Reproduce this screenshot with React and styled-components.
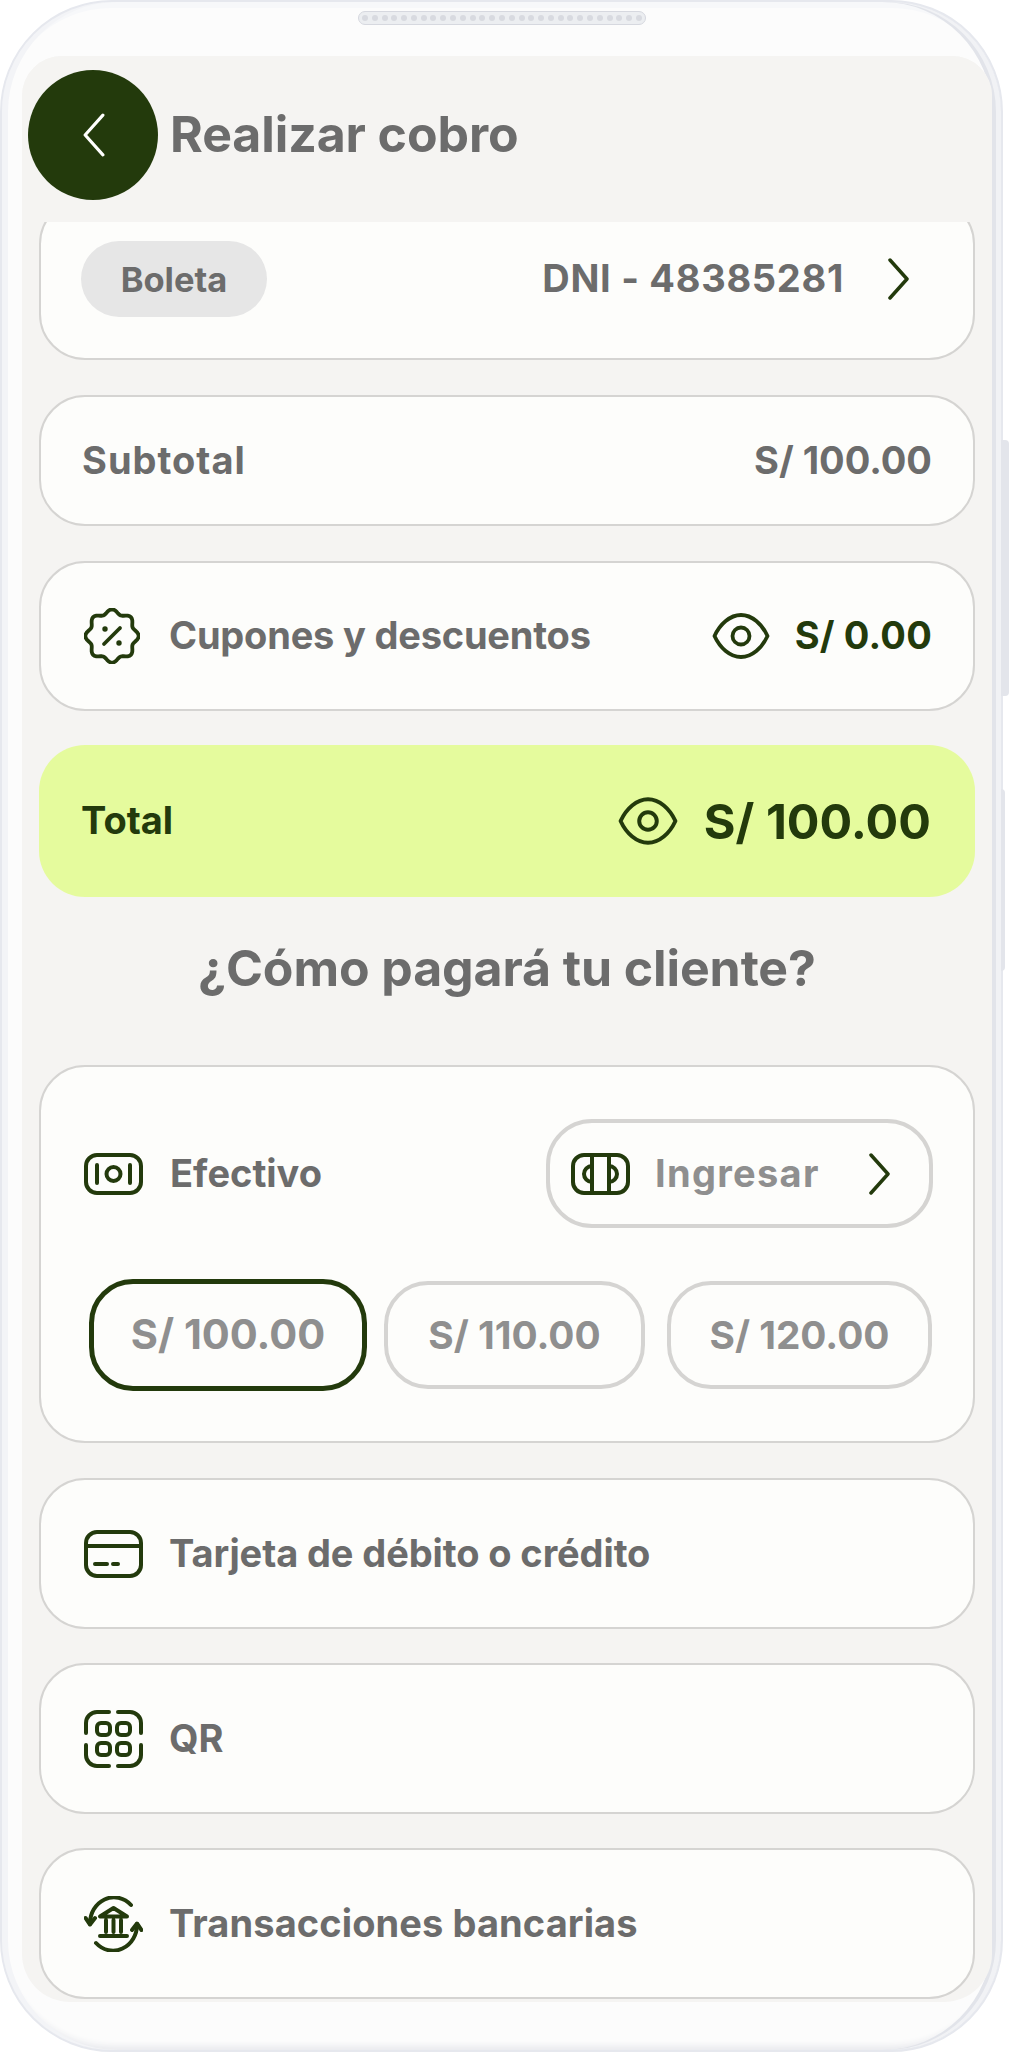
import React from 'react';
import styled, { createGlobalStyle } from 'styled-components';

const DARK = '#233a0c';
const TEXT = '#6c6c6c';
const SOFT = '#8f8f8f';
const LINE = '#d5d4d2';

const GlobalStyle = createGlobalStyle`
  html, body {
    margin: 0;
    padding: 0;
    background: #ffffff;
  }
  body {
    font-family: Inter, "Liberation Sans", sans-serif;
    font-weight: 650;
    color: ${TEXT};
  }
`;

const Phone = styled.div`
  position: relative;
  box-sizing: border-box;
  width: 1003px;
  height: 2052px;
  padding: 54px 9px 0 20px;
  background: #fcfcfc;
  border-radius: 112px;
  border: 2px solid #e6e8ee;
  box-shadow:
    inset -5px 0 0 #f1f2f5,
    inset -9px 0 0 #e2e4ea,
    inset 6px 0 0 #f3f4f7,
    inset 0 -6px 6px -2px #e9eaee,
    inset 0 6px 0 #f7f8fa;
`;

const SideButton = styled.div`
  position: absolute;
  left: 100%;
  top: ${(props) => props.$top}px;
  width: ${(props) => props.$width}px;
  height: ${(props) => props.$height}px;
  background: #e3e5eb;
  border-radius: 0 4px 4px 0;
`;

const Speaker = styled.div`
  position: absolute;
  top: 9px;
  left: 356px;
  width: 288px;
  height: 14px;
  box-sizing: border-box;
  display: flex;
  align-items: center;
  justify-content: space-between;
  padding: 0 3px;
  background: #eceef1;
  border: 1px solid #d6d8df;
  border-radius: 7px;
`;

const SpeakerDot = styled.span`
  width: 6px;
  height: 6px;
  border-radius: 50%;
  background: #d8dae0;
`;

const Screen = styled.div`
  height: 1946px;
  display: flex;
  flex-direction: column;
  overflow: hidden;
  background: #f5f4f2;
  border-radius: 40px 40px 48px 48px;
`;

const Header = styled.header`
  flex: none;
  position: relative;
  z-index: 1;
  box-sizing: border-box;
  height: 166px;
  display: flex;
  align-items: center;
  gap: 12px;
  padding: 0 0 8px 6px;
  background: #f5f4f2;
`;

const BackButton = styled.button`
  width: 130px;
  height: 130px;
  padding: 0;
  border: none;
  border-radius: 50%;
  display: flex;
  align-items: center;
  justify-content: center;
  background: ${DARK};
`;

const Title = styled.h1`
  margin: 0 0 2px;
  font-size: 50px;
  font-weight: 650;
  letter-spacing: -0.1px;
  color: ${TEXT};
`;

const Content = styled.main`
  display: flex;
  flex-direction: column;
  gap: 35px;
  padding: 0 17px;
`;

const Card = styled.section`
  box-sizing: border-box;
  height: ${(props) => props.$height}px;
  flex: none;
  display: flex;
  align-items: center;
  justify-content: space-between;
  margin-top: ${(props) => (props.$tight ? -1 : 0)}px;
  padding: 0 ${(props) => props.$right || 41}px 0 ${(props) => props.$left || 43}px;
  background: #fdfdfb;
  border: 2px solid ${LINE};
  border-radius: 46px;
`;

// The first card is scrolled partly under the header
const ScrolledCard = styled(Card)`
  margin-top: -24px;
`;

const TotalCard = styled(Card)`
  background: #e5fb9d;
  border: none;
  padding: 0 44px 0 42px;
  margin-top: -1px;
`;

const CashCard = styled.section`
  box-sizing: border-box;
  height: 378px;
  flex: none;
  padding: 52px 40px 0 43px;
  display: flex;
  flex-direction: column;
  gap: 51px;
  background: #fdfdfb;
  border: 2px solid ${LINE};
  border-radius: 46px;
`;

const CashRow = styled.div`
  display: flex;
  align-items: center;
  justify-content: space-between;
`;

const AmountRow = styled.div`
  display: flex;
  align-items: center;
  gap: 17px;
  padding-left: 5px;
`;

const Group = styled.div`
  display: flex;
  align-items: center;
  gap: ${(props) => props.$gap || 27}px;
`;

const Label = styled.span`
  padding-bottom: 2px;
  font-size: 38px;
  font-weight: 650;
  letter-spacing: ${(props) => props.$spacing || 0}px;
  color: ${(props) => props.$color || TEXT};
  white-space: nowrap;
`;

const Chip = styled.span`
  width: 186px;
  height: 76px;
  display: flex;
  align-items: center;
  justify-content: center;
  background: #e6e6e6;
  border-radius: 38px;
  font-size: 34.5px;
  color: ${TEXT};
`;

const BigAmount = styled.span`
  font-size: 48.5px;
  font-weight: 700;
  color: ${DARK};
`;

const Heading = styled.h2`
  margin: 5px 0 31px;
  height: 62px;
  line-height: 62px;
  text-align: center;
  font-size: 50px;
  font-weight: 650;
  letter-spacing: -0.1px;
  color: ${TEXT};
`;

const IngresarButton = styled.button`
  box-sizing: border-box;
  width: 387px;
  height: 109px;
  padding: 0 38px 0 21px;
  display: flex;
  align-items: center;
  gap: 25px;
  background: transparent;
  border: 4px solid ${LINE};
  border-radius: 46px;
  font: inherit;

  & > svg:last-child {
    margin-left: auto;
  }
`;

const AmountButton = styled.button`
  box-sizing: border-box;
  flex: none;
  width: ${(props) => props.$width}px;
  height: ${(props) => (props.$active ? 112 : 108)}px;
  margin-left: ${(props) => props.$shift || 0}px;
  padding: 0 0 2px;
  background: transparent;
  border: ${(props) => (props.$active ? `5px solid ${DARK}` : `4px solid ${LINE}`)};
  border-radius: 44px;
  font-family: inherit;
  font-weight: 650;
  font-size: ${(props) => (props.$active ? 41.5 : 38.8)}px;
  color: ${SOFT};
`;

const Icon = styled.svg`
  flex: none;
  display: block;
  fill: none;
  stroke: ${(props) => props.$color || DARK};
  stroke-width: ${(props) => props.$stroke || 4};
  stroke-linecap: round;
  stroke-linejoin: round;
`;

const Chevron = ({ left, color, width = 22, height = 42, stroke = 3.5 }) => (
  <Icon $color={color} $stroke={stroke} width={width} height={height} viewBox="0 0 22 42">
    {left ? <path d="M20 2 L3 21 L20 40" /> : <path d="M2 2 L19 21 L2 40" />}
  </Icon>
);

const Eye = ({ width = 58, height = 48 }) => (
  <Icon $stroke={3.8} width={width} height={height} viewBox="0 0 58 48">
    <path d="M2.5 24 C8 12 18 3 29 3 C40 3 50 12 55.5 24 C50 36 40 45 29 45 C18 45 8 36 2.5 24 Z" />
    <circle cx="29" cy="24" r="8.5" />
  </Icon>
);

// Scalloped outline of the coupon badge: a circle with eight soft lobes
const badgeOutline = Array.from({ length: 96 }, (_, i) => {
  const angle = (i / 96) * Math.PI * 2;
  const radius = 24.5 + 2.2 * Math.cos(angle * 8);
  const x = 28 + radius * Math.sin(angle);
  const y = 28 - radius * Math.cos(angle);
  return `${x.toFixed(2)},${y.toFixed(2)}`;
}).join(' ');

const BadgeIcon = () => (
  <Icon $stroke={3.8} width="56" height="56" viewBox="0 0 56 56">
    <polygon points={badgeOutline} />
    <path d="M20 36 L36 20" />
    <path d="M21 21 h.01 M35 35 h.01" strokeWidth="5.4" />
  </Icon>
);

const MoneyIcon = () => (
  <Icon width="59" height="42" viewBox="0 0 59 42">
    <rect x="2" y="2" width="55" height="38" rx="11" />
    <path d="M13 12 V30 M46 12 V30" />
    <circle cx="29.5" cy="21" r="7" />
  </Icon>
);

const NoteIcon = () => (
  <Icon width="59" height="42" viewBox="0 0 59 42">
    <rect x="2" y="2" width="55" height="38" rx="11" />
    <path d="M21 2 V40 M38 2 V40" />
    <path d="M21 13 A8 8 0 0 0 21 29 M38 13 A8 8 0 0 1 38 29" />
  </Icon>
);

const CardIcon = () => (
  <Icon width="59" height="48" viewBox="0 0 59 48">
    <rect x="2" y="2" width="55" height="44" rx="11" />
    <path d="M2 16 H57 M11 34 H23 M29 34 H34" />
  </Icon>
);

const QrIcon = () => (
  <Icon width="59" height="58" viewBox="0 0 59 58">
    <path d="M25 2 H13 A11 11 0 0 0 2 13 V23 M34 2 H46 A11 11 0 0 1 57 13 V23 M25 56 H13 A11 11 0 0 1 2 45 V35 M34 56 H46 A11 11 0 0 0 57 45 V35" />
    <rect x="13" y="13" width="13" height="12" rx="4" />
    <rect x="33" y="13" width="13" height="12" rx="4" />
    <rect x="13" y="33" width="13" height="12" rx="4" />
    <rect x="33" y="33" width="13" height="12" rx="4" />
  </Icon>
);

const BankIcon = () => (
  <Icon $stroke={4} width="59" height="56" viewBox="0 0 59 56">
    <path d="M47 9 A24 26 0 0 0 6 28" />
    <path d="M1.5 22 L6 28.5 L11 22" />
    <path d="M12 47 A24 26 0 0 0 53 28" />
    <path d="M48 34 L53 27.5 L57.5 34" />
    <path d="M29.5 12 L16 20.5 H43 Z M16 40 H43 M22 24 V36 M29.5 24 V36 M37 24 V36" />
  </Icon>
);

const speakerDots = Array.from({ length: 29 }, (_, i) => i);

const App = () => (
  <>
    <GlobalStyle />
    <Phone>
      <Speaker>
        {speakerDots.map((i) => (
          <SpeakerDot key={i} />
        ))}
      </Speaker>
      <SideButton $top={438} $width={8} $height={256} />
      <SideButton $top={787} $width={4} $height={182} />
      <Screen>
        <Header>
          <BackButton>
            <Chevron left color="#ffffff" width={23} height={44} stroke={3} />
          </BackButton>
          <Title>Realizar cobro</Title>
        </Header>
        <Content>
          <ScrolledCard $height={162} $left={40} $right={63}>
            <Chip>Boleta</Chip>
            <Group $gap={44}>
              <Label $spacing={0.7}>DNI - 48385281</Label>
              <Chevron />
            </Group>
          </ScrolledCard>
          <Card $height={131} $left={41}>
            <Label $spacing={1}>Subtotal</Label>
            <Label>S/ 100.00</Label>
          </Card>
          <Card $height={150}>
            <Group $gap={29}>
              <BadgeIcon />
              <Label $spacing={-0.2}>Cupones y descuentos</Label>
            </Group>
            <Group $gap={25}>
              <Eye />
              <Label $color={DARK} $spacing={0.2}>S/ 0.00</Label>
            </Group>
          </Card>
          <TotalCard $height={152}>
            <Label $color={DARK}>Total</Label>
            <Group $gap={26}>
              <Eye width={60} height={50} />
              <BigAmount>S/ 100.00</BigAmount>
            </Group>
          </TotalCard>
          <Heading>¿Cómo pagará tu cliente?</Heading>
          <CashCard>
            <CashRow>
              <Group $gap={27}>
                <MoneyIcon />
                <Label>Efectivo</Label>
              </Group>
              <IngresarButton>
                <NoteIcon />
                <Label $color={SOFT} $spacing={1.3}>Ingresar</Label>
                <Chevron />
              </IngresarButton>
            </CashRow>
            <AmountRow>
              <AmountButton $active $width={278}>S/ 100.00</AmountButton>
              <AmountButton $width={261}>S/ 110.00</AmountButton>
              <AmountButton $width={265} $shift={5}>S/ 120.00</AmountButton>
            </AmountRow>
          </CashCard>
          <Card $height={151}>
            <Group $gap={26}>
              <CardIcon />
              <Label $spacing={-0.1}>Tarjeta de débito o crédito</Label>
            </Group>
          </Card>
          <Card $height={151} $tight>
            <Group $gap={26}>
              <QrIcon />
              <Label>QR</Label>
            </Group>
          </Card>
          <Card $height={151} $tight>
            <Group $gap={26}>
              <BankIcon />
              <Label $spacing={0.1}>Transacciones bancarias</Label>
            </Group>
          </Card>
        </Content>
      </Screen>
    </Phone>
  </>
);

export default App;
